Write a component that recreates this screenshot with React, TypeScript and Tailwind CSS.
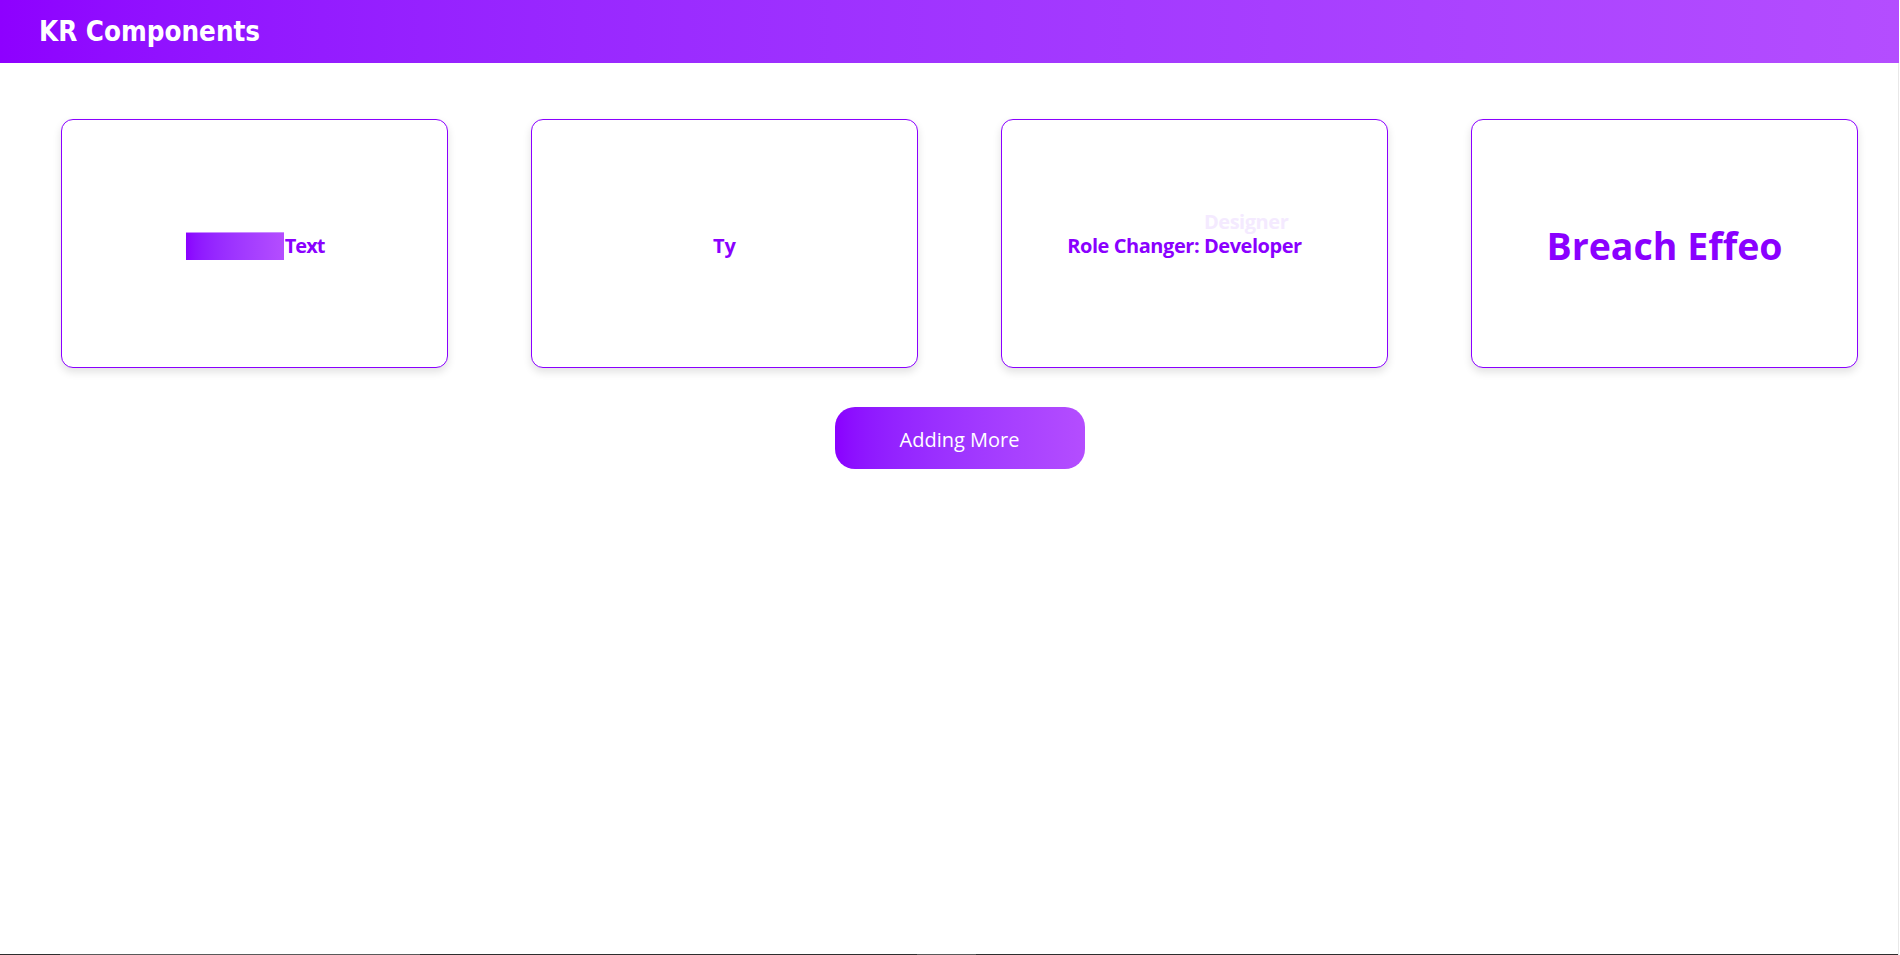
import React from "react";

const cardText = "font-['Open_Sans','Noto_Sans',sans-serif] font-bold text-[#8a00ff]";

function Card({ children }: { children: React.ReactNode }) {
  return (
    <div className="w-[387px] h-[249px] shrink-0 rounded-[12px] border border-[#8a00ff] bg-white shadow-[0_4px_8px_rgba(0,0,0,0.12)] flex items-center justify-center pt-[5px]">
      {children}
    </div>
  );
}

export default function App() {
  return (
    <div className="flex h-[955px] w-full bg-white overflow-hidden">
      <div className="flex flex-col flex-1 min-w-0">
        <header className="h-[63px] shrink-0 flex items-center pl-[39px] bg-gradient-to-r from-[#8e00ff] to-[#b44dff]">
          <h1 className="text-white font-bold text-[27.5px] leading-none font-['DejaVu_Sans_Condensed','DejaVu_Sans',sans-serif]">
            KR Components
          </h1>
        </header>
        <main className="flex-1 flex flex-col border-r border-[#e8e8e8]">
          <div className="pt-[56px] pl-[61px] pr-[40px]">
            <div className="flex justify-between">
              <Card>
                <span className={`relative inline-block text-[20px] leading-[28px] ${cardText}`}>
                  <span className="tracking-[2px]">Loading </span>
                  <span className="tracking-[-1px]">Text</span>
                  <span className="absolute left-[1px] top-0 h-full w-[98px] bg-gradient-to-r from-[#8a00ff] to-[#b44dff] border-t border-[#c98aff]" />
                </span>
              </Card>
              <Card>
                <span className={`text-[20px] leading-[28px] ${cardText}`}>Ty</span>
              </Card>
              <Card>
                <span className={`text-[20px] leading-[28px] tracking-[-0.45px] pr-[20px] ${cardText} flex items-center`}>
                  <span className="whitespace-pre">Role Changer: </span>
                  <span className="relative inline-block">
                    <span className="absolute left-0 bottom-[24px] text-[#f4eaff]">Designer</span>
                    <span>Developer</span>
                  </span>
                </span>
              </Card>
              <Card>
                <span className={`text-[37.5px] leading-[50px] ${cardText}`}>Breach Effeo</span>
              </Card>
            </div>
            <div className="flex justify-center mt-[39px]">
              <button className="w-[250px] h-[62px] pt-[4px] rounded-[20px] bg-gradient-to-r from-[#8a00ff] to-[#b44dff] text-white text-[20px] font-['Open_Sans','Noto_Sans',sans-serif]">
                Adding More
              </button>
            </div>
          </div>
          <div className="flex-1" />
          <div className="h-px flex shrink-0 bg-[#2e2e2e]">
            <div className="w-[60px]" />
            <div className="w-[360px] bg-[#5a5a5a]" />
            <div className="w-[497px]" />
            <div className="w-[59px] bg-[#5a5a5a]" />
          </div>
        </main>
      </div>
      <div className="w-px shrink-0 bg-white" />
    </div>
  );
}
